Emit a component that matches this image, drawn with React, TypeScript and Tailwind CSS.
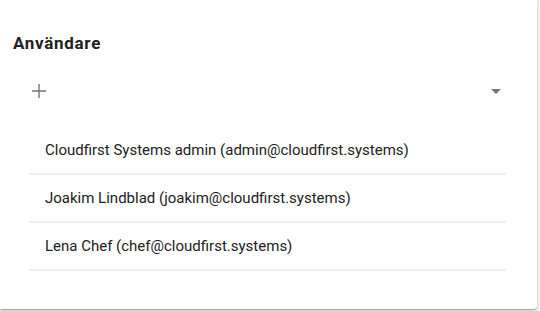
const users = [
  'Cloudfirst Systems admin (admin@cloudfirst.systems)',
  'Joakim Lindblad (joakim@cloudfirst.systems)',
  'Lena Chef (chef@cloudfirst.systems)',
];

export default function App() {
  return (
    <div className="w-[540px] h-[311px] bg-[#f5f5f5] overflow-hidden" style={{ fontFamily: 'Roboto, "Liberation Sans", sans-serif' }}>
      <div className="w-[537px] h-[309px] bg-white rounded-br-[3px] shadow-[0_1px_3px_rgba(0,0,0,0.2),0_1px_1px_rgba(0,0,0,0.14),0_2px_1px_-1px_rgba(0,0,0,0.12)]">
        <div className="pt-[33px] pl-[13px]">
          <h2 className="text-[17px] leading-5 font-bold text-[#212121] tracking-[0.7px]">Användare</h2>
        </div>

        <div className="mt-[18px] flex items-center justify-between pl-[32px] pr-[36px] h-[40px]">
          <button className="w-[14px] h-[14px] text-[#757575]">
            <svg viewBox="0 0 14 14" className="w-[14px] h-[14px]">
              <path d="M7 0v14M0 7h14" stroke="currentColor" strokeWidth="1.4" fill="none" />
            </svg>
          </button>
          <svg viewBox="0 0 10 5" className="w-[10px] h-[5px] text-[#757575]">
            <path d="M0 0h10L5 5z" fill="currentColor" />
          </svg>
        </div>

        <ul className="mt-[16px] ml-[29px] w-[477px]">
          {users.map((u) => (
            <li key={u} className="h-[48px] flex items-center pl-[16px] border-b-2 border-[#eeeeee] text-[15px] text-[#212121]">
              {u}
            </li>
          ))}
        </ul>
      </div>
    </div>
  );
}
